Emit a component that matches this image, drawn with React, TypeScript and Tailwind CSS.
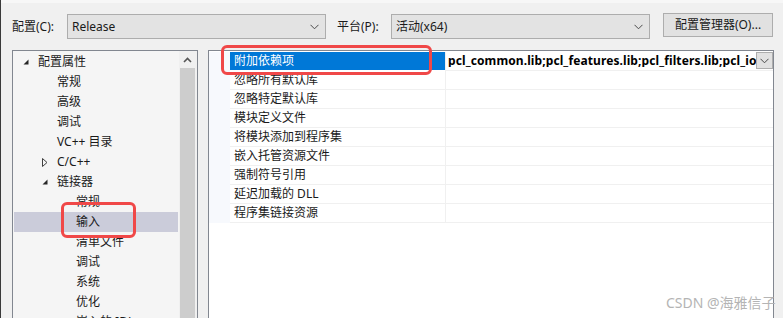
import React from "react";

const Chevron = ({ className = "" }: { className?: string }) => (
  <svg width="9" height="6" viewBox="0 0 9 6" className={className}>
    <polyline points="0.5,0.8 4.5,4.8 8.5,0.8" fill="none" stroke="#4a4a4a" strokeWidth="1" />
  </svg>
);

const OpenArrow = () => (
  <svg width="6" height="6" viewBox="0 0 6 6">
    <polygon points="5.5,0.5 5.5,5.5 0.5,5.5" fill="#262626" />
  </svg>
);

const ClosedArrow = () => (
  <svg width="6" height="9" viewBox="0 0 6 9">
    <polygon points="0.5,0.5 5,4.5 0.5,8.5" fill="none" stroke="#404040" strokeWidth="1" />
  </svg>
);

type TreeItem = { t: string; lvl: 0 | 1 | 2; arrow?: "open" | "closed"; sel?: boolean };

const tree: TreeItem[] = [
  { t: "配置属性", lvl: 0, arrow: "open" },
  { t: "常规", lvl: 1 },
  { t: "高级", lvl: 1 },
  { t: "调试", lvl: 1 },
  { t: "VC++ 目录", lvl: 1 },
  { t: "C/C++", lvl: 1, arrow: "closed" },
  { t: "链接器", lvl: 1, arrow: "open" },
  { t: "常规", lvl: 2 },
  { t: "输入", lvl: 2, sel: true },
  { t: "清单文件", lvl: 2 },
  { t: "调试", lvl: 2 },
  { t: "系统", lvl: 2 },
  { t: "优化", lvl: 2 },
  { t: "嵌入的 IDL", lvl: 2 },
];

const lvlPad = ["pl-[9px]", "pl-[28px]", "pl-[47px]"];

const props = [
  "附加依赖项",
  "忽略所有默认库",
  "忽略特定默认库",
  "模块定义文件",
  "将模块添加到程序集",
  "嵌入托管资源文件",
  "强制符号引用",
  "延迟加载的 DLL",
  "程序集链接资源",
];

export default function App() {
  return (
    <div className="relative w-[783px] h-[318px] overflow-hidden bg-[#f0f0f0] border-l border-[#3a3a3a] text-[12px] text-[#1a1a1a] font-['Noto_Sans','Noto_Sans_CJK_SC',sans-serif]">
      <div className="h-[3px] bg-[#f7f7f7]" />
      {/* toolbar */}
      <div className="flex items-start pt-[10px] h-[39px]">
        <div className="w-[66px] pl-[11px] h-[25px] mt-[1px] flex items-center leading-none">配置(C):</div>
        <div className="w-[259px] h-[25px] mt-[1px] bg-[#e3e3e3] border border-[#adadad] flex items-center pl-[4px] pr-[6px] leading-none">
          <span className="flex-1">Release</span>
          <Chevron />
        </div>
        <div className="w-[54px] ml-[11px] h-[25px] mt-[1px] flex items-center leading-none">平台(P):</div>
        <div className="w-[259px] h-[25px] mt-[1px] bg-[#e3e3e3] border border-[#adadad] flex items-center pl-[4px] pr-[6px] leading-none">
          <span className="flex-1">活动(x64)</span>
          <Chevron />
        </div>
        <div className="ml-[13px] w-[110px] h-[24px] bg-[#e1e1e1] border border-[#adadad] flex items-center justify-center leading-none">
          配置管理器(O)...
        </div>
      </div>

      {/* main */}
      <div className="flex mt-[8px]">
        {/* tree */}
        <div className="ml-[11px] w-[186px] h-[280px] border border-[#828790] bg-[#f5f5f5] flex">
          <div className="w-[166px] px-[1px] pt-[1px]">
            {tree.map((it, i) => (
              <div
                key={i}
                className={`h-[20px] flex items-center leading-none ${lvlPad[it.lvl]} ${it.sel ? "bg-[#cbccda]" : ""}`}
              >
                <span className="w-[15px] flex items-center">
                  {it.arrow === "open" && <OpenArrow />}
                  {it.arrow === "closed" && <ClosedArrow />}
                </span>
                <span className="whitespace-nowrap">{it.t}</span>
              </div>
            ))}
          </div>
          <div className="w-[18px] flex flex-col bg-[#f0f0f0] pl-[1px] pr-[2px]">
            <div className="h-[17px] flex items-center justify-center">
              <svg width="9" height="6" viewBox="0 0 9 6">
                <polyline points="1,5 4.5,1.5 8,5" fill="none" stroke="#555" strokeWidth="1.6" />
              </svg>
            </div>
            <div className="flex-1 bg-[#cdcdcd]" />
          </div>
        </div>

        {/* property grid */}
        <div className="ml-[10px] w-[566px] h-[280px] border border-[#828790] bg-white">
          <div className="pt-[1px]">
            {props.map((p, i) => (
              <div key={i} className="flex h-[19px]">
                <div className="w-[21px] bg-[#f7f9fd]" />
                <div
                  className={`w-[215px] flex items-center pl-[4px] leading-none border-b ${
                    i === 0 ? "bg-[#0078d7] text-white border-white" : "border-[#f0f0f0]"
                  }`}
                >
                  {p}
                </div>
                <div className="w-[1px] bg-[#f0f0f0]" />
                <div className="flex-1 flex items-center border-b border-[#f0f0f0] min-w-0">
                  {i === 0 && (
                    <>
                      <span className="flex-1 min-w-0 overflow-hidden whitespace-nowrap font-bold pl-[2px] leading-none text-black tracking-[0.1px]">
                        pcl_common.lib;pcl_features.lib;pcl_filters.lib;pcl_io.lib;pcl_kdtree.lib
                      </span>
                      <div className="w-[17px] h-[17px] mb-[1px] bg-[#e1e1e1] border border-[#adadad] flex items-center justify-center">
                        <Chevron />
                      </div>
                    </>
                  )}
                </div>
              </div>
            ))}
          </div>
        </div>
      </div>

      {/* annotations */}
      <div className="absolute left-[220px] top-[45px] w-[211px] h-[30px] border-[3px] border-[#f04848] rounded-[6px]" />
      <div className="absolute left-[60px] top-[202px] w-[75px] h-[36px] border-[3px] border-[#f04848] rounded-[6px]" />

      {/* watermark */}
      <div className="absolute left-[665px] top-[296px] text-[14px] leading-none text-[#b4b4b4] whitespace-nowrap">
        CSDN @海雅信子
      </div>
    </div>
  );
}
